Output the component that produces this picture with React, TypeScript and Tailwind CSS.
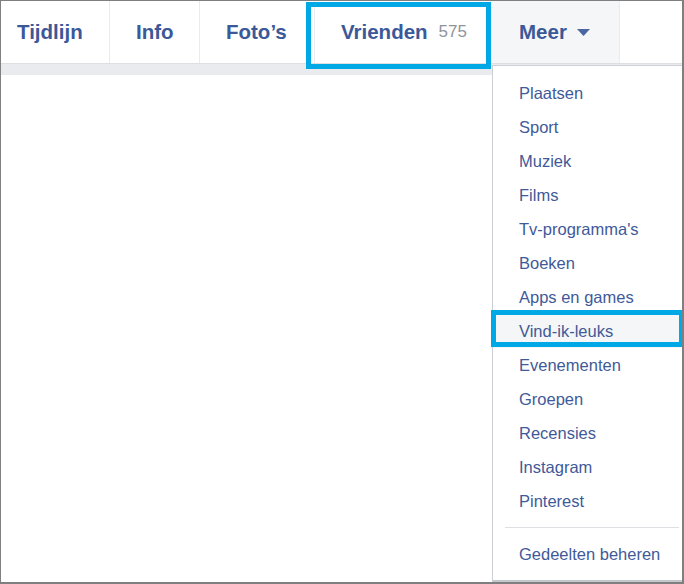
const MENU = [
  "Plaatsen",
  "Sport",
  "Muziek",
  "Films",
  "Tv-programma's",
  "Boeken",
  "Apps en games",
  "Vind-ik-leuks",
  "Evenementen",
  "Groepen",
  "Recensies",
  "Instagram",
  "Pinterest",
];

export default function App() {
  return (
    <div className="relative w-[684px] h-[584px] overflow-hidden bg-white border-t border-l border-r-2 border-b-2 border-[#7f7f7f] font-['Liberation_Sans',Arial,sans-serif]">
      {/* Tab bar */}
      <div className="flex h-[63px] border-b border-[#dddfe2] text-[20.5px] font-bold text-[#3b5998]">
        <div className="flex w-[109px] items-center border-r border-[#e9ebee] pl-[16px]">Tijdlijn</div>
        <div className="flex w-[90px] items-center border-r border-[#e9ebee] pl-[26px]">Info</div>
        <div className="flex w-[115px] items-center border-r border-[#e9ebee] pl-[26px]">Foto’s</div>
        <div className="flex w-[176px] items-center gap-[11px] border-r border-[#e9ebee] pl-[26px]">
          Vrienden
          <span className="text-[17px] font-normal text-[#90949c]">575</span>
        </div>
        <div className="flex w-[129px] items-center gap-[10px] border-r border-[#e9ebee] bg-[#f5f6f7] pl-[28px]">
          Meer
          <svg width="13" height="7" viewBox="0 0 13 7" className="mt-[1px]">
            <path d="M0 0h13L6.5 7z" fill="#4b67a1" />
          </svg>
        </div>
      </div>
      <div className="h-[11px] bg-[#e9ebee]" />

      {/* Dropdown */}
      <div className="absolute left-[491px] top-[64px] w-[200px] border border-[#ccd0d5] border-b-2 border-b-[#c4c7cc] bg-white pt-[10px] pb-[9px]">
        {MENU.map((m) => (
          <div
            key={m}
            className={`flex h-[34px] items-center pl-[26px] text-[16.5px] text-[#3f5a98] ${
              m === "Vind-ik-leuks" ? "bg-[#f5f6f7]" : ""
            }`}
          >
            {m}
          </div>
        ))}
        <div className="mx-[12px] my-[9px] border-t border-[#dddfe2]" />
        <div className="flex h-[34px] items-center pl-[26px] text-[16.5px] text-[#3f5a98]">
          Gedeelten beheren
        </div>
      </div>

      {/* Highlight annotations */}
      <div className="absolute left-[305px] top-[1px] w-[185px] h-[67px] border-[5px] border-[#00a8e6]" />
      <div className="absolute left-[490px] top-[309px] w-[193px] h-[37px] border-[5px] border-[#00a8e6]" />
    </div>
  );
}
